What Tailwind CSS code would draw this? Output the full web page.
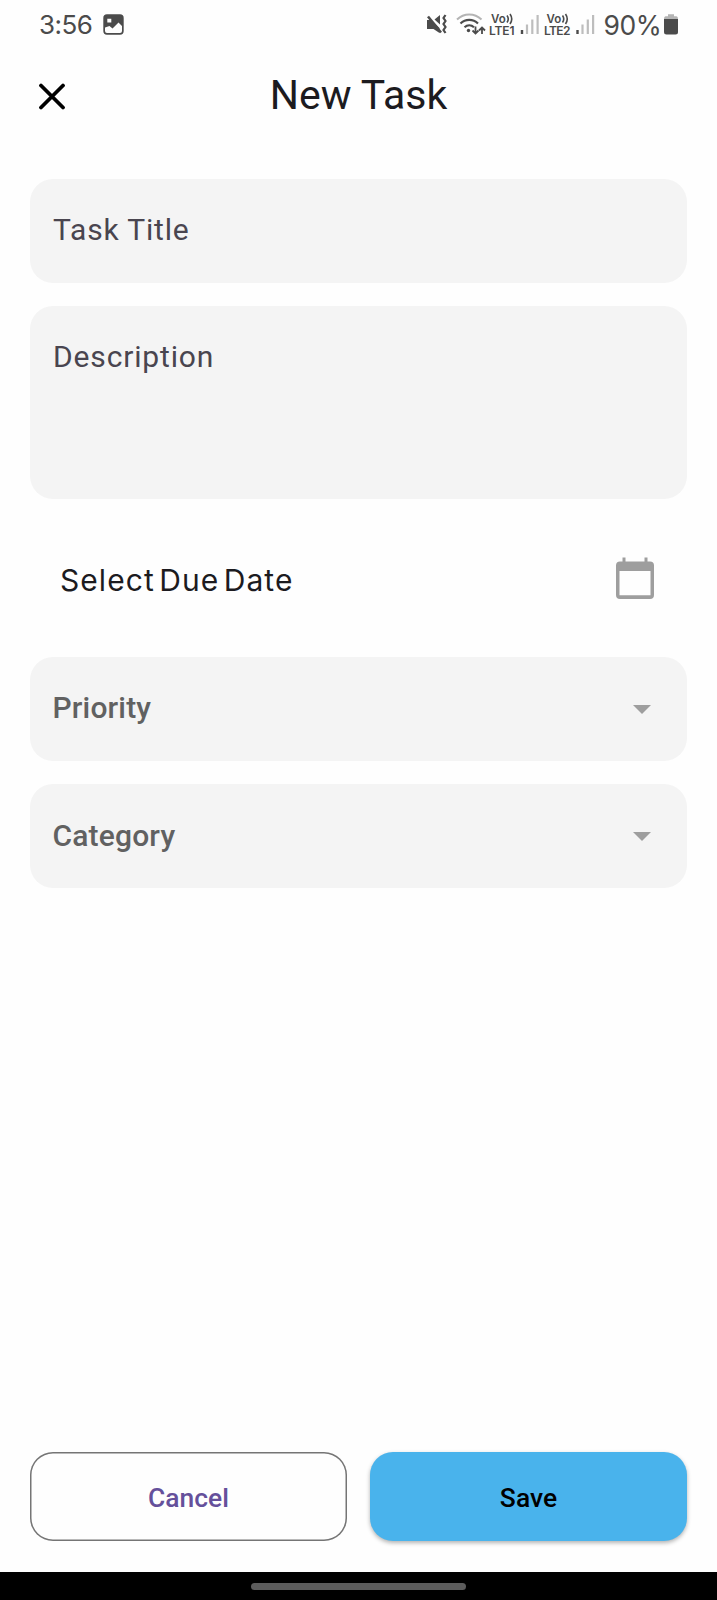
<!DOCTYPE html>
<html lang="en">
<head>
<meta charset="utf-8">
<title>New Task</title>
<script src="https://cdn.jsdelivr.net/npm/@tailwindcss/browser@4"></script>
</head>
<body class="bg-[#fefefe]">
<div class="flex h-[1600px] w-[717px] flex-col overflow-hidden bg-[#fefefe] font-['Roboto',sans-serif] text-[#1c1b1f]">
  <!-- Status bar -->
  <div class="flex h-[49px] shrink-0 items-center justify-between pl-[39px] pr-[38px] font-['Inter',sans-serif] text-[#4b4b4b]">
    <div class="flex items-center">
      <span class="w-[64px] text-[26px] leading-[30px] tracking-[-0.500px]">3:56</span>
      <svg class="h-[21px] w-[21px]" viewBox="0 0 21 21"><path fill="#4b4b4b" fill-rule="evenodd" d="M4 .3h13a3.700 3.700 0 0 1 3.700 3.700v13a3.700 3.700 0 0 1-3.700 3.700H4A3.700 3.700 0 0 1 .3 17V4A3.700 3.700 0 0 1 4 .3ZM4.300 4.800v3.800h4V4.800ZM2 13.500V17a2 2 0 0 0 2 2h13a2 2 0 0 0 2-2v-5l-3.500-3.500-6 6-3-2.500Z"/></svg>
    </div>
    <div class="flex items-center">
      <svg class="h-[49px] w-[177px]" viewBox="420 0 177 49" fill="none">
        <path fill="#4b4b4b" d="M427 20h4.500l8 8v5L433.500 29H427ZM434.500 19.500l5.500-4.500v9.500Z"/>
        <path stroke="#4b4b4b" stroke-width="2.600" d="M428 16.500 441 32.500"/>
        <path stroke="#4b4b4b" stroke-width="2.200" d="M445.500 15l-2 3 2 3-2 3 2 3-2 3 2 3"/>
        <path stroke="#b4b4b4" stroke-width="2" d="M457 19.500c7-6.700 17.500-6.700 24.500 0"/>
        <path stroke="#4b4b4b" stroke-width="2.200" d="M460.500 23.500c5-4.800 12.500-4.800 17.500 0M464.500 27.300c2.800-2.500 6.700-2.500 9.500 0"/>
        <circle cx="468.500" cy="30.500" r="1.700" fill="#4b4b4b"/>
        <path stroke="#4b4b4b" stroke-width="1.800" d="M475.500 26.500v7M472.500 30.500l3 3 3-3M482 34v-7M479 30.500l3-3 3 3"/>
        <g fill="#4b4b4b" font-family="Inter, sans-serif" font-weight="600">
          <text x="491" y="23.200" font-size="11.500">Vo</text>
          <text x="489" y="35" font-size="12" textLength="25.500">LTE1</text>
          <text x="546.500" y="23.200" font-size="11.500">Vo</text>
          <text x="544" y="35" font-size="12" textLength="26.500">LTE2</text>
        </g>
        <path stroke="#4b4b4b" stroke-width="1.600" d="M507 15.500q2.500 3.500 0 7M510 14q3.500 5 0 10M562.500 15.500q2.500 3.500 0 7M565.500 14q3.500 5 0 10"/>
        <path stroke="#4b4b4b" stroke-width="2.400" d="M522 30v4M577.500 30v4"/>
        <path stroke="#bdbdbd" stroke-width="2.200" d="M527 24.500v9.500M532.300 19.500v14.500M537.600 15v19M582.500 24.500v9.500M587.800 19.500v14.500M593.100 15v19"/>
      </svg>
      <span class="ml-[6.500px] w-[56.500px] text-[26.500px] leading-[30px] tracking-[-0.500px]">90%</span>
      <svg class="ml-[3px] h-[21px] w-[16px]" viewBox="0 0 16 21"><path fill="#b4b4b4" d="M5 .3h6v2h2.500Q15 2.300 15 5H1q0-2.700 1.500-2.700H5Z"/><path fill="#4b4b4b" d="M1 5h14v13q0 2.500-2.500 2.500h-9Q1 20.500 1 18Z"/></svg>
    </div>
  </div>

  <!-- Header -->
  <header class="grid h-[91px] shrink-0 grid-cols-[1fr_auto_1fr] items-center pl-[38px] pr-[38px]">
    <svg class="mt-[4px] h-[28px] w-[28px]" viewBox="0 0 28 28"><path d="M3 2.500l22 22M25 2.500l-22 22" stroke="#000" stroke-width="3.800" stroke-linecap="round"/></svg>
    <h1 class="text-[41px] leading-[50px]">New Task</h1>
  </header>

  <!-- Form -->
  <main class="flex flex-1 flex-col px-[30px] pt-[39px] text-[30px]">
    <div class="flex h-[103.500px] items-center rounded-[23px] bg-[#f4f4f4] px-[23px] pb-[2px] leading-[36px] tracking-[0.820px] text-[#49454f]">Task Title</div>
    <div class="mt-[23px] h-[193.500px] rounded-[23px] bg-[#f4f4f4] px-[23px] pt-[33px] leading-[36px] tracking-[0.850px] text-[#49454f]">Description</div>
    <div class="flex h-[158px] items-center justify-between pl-[30px] pr-[33px]">
      <span class="pt-[4px] font-['Inter',sans-serif] text-[30px] font-normal leading-[38px] tracking-[1.050px] [word-spacing:-5px]">Select Due Date</span>
      <svg class="h-[42px] w-[38px]" viewBox="0 0 38 42"><path fill="#9e9e9e" fill-rule="evenodd" d="M6.500.5h3v4h19v-4h3v4h2.500a4 4 0 0 1 4 4V38a4 4 0 0 1-4 4H4a4 4 0 0 1-4-4V8.500a4 4 0 0 1 4-4h2.500ZM3.500 14v24.300h31V14Z"/></svg>
    </div>
    <div class="flex h-[103.500px] items-center justify-between rounded-[23px] bg-[#f4f4f4] pl-[22.500px] pr-[36px] pb-[2px] font-medium leading-[36px] tracking-[0.170px] text-[#616161]">Priority
      <svg class="mt-[4px] h-[9px] w-[18px]" viewBox="0 0 18 9"><path fill="#9e9e9e" d="M0 0h18L9 9Z"/></svg>
    </div>
    <div class="mt-[23px] flex h-[104px] items-center justify-between rounded-[23px] bg-[#f4f4f4] pl-[22.500px] pr-[36px] font-medium leading-[36px] tracking-[0.170px] text-[#616161]">Category
      <svg class="mt-[1px] h-[9px] w-[18px]" viewBox="0 0 18 9"><path fill="#9e9e9e" d="M0 0h18L9 9Z"/></svg>
    </div>
  </main>

  <!-- Actions -->
  <div class="grid shrink-0 grid-cols-2 gap-[23px] px-[30px] pb-[31px] text-[26.400px] font-medium leading-[32px] tracking-[0.050px]">
    <button class="h-[89px] rounded-[23px] pt-[2px] text-[#65509b] shadow-[inset_0_0_0_1.500px_#757575]">Cancel</button>
    <button class="h-[89px] rounded-[23px] bg-[#49b3ec] pt-[2px] text-black shadow-[0_2px_4px_rgba(0,0,0,0.3)]">Save</button>
  </div>

  <!-- Navigation bar -->
  <div class="flex h-[28px] shrink-0 justify-center bg-black pt-[11px]">
    <div class="h-[7px] w-[215px] rounded-full bg-[#5c5c5c]"></div>
  </div>
</div>
</body>
</html>
